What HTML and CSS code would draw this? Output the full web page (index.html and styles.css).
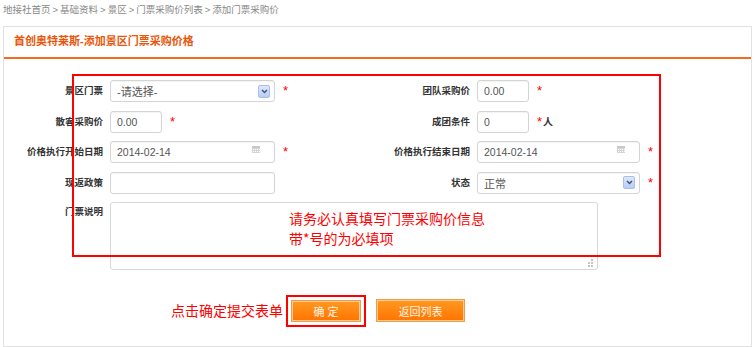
FILE: index.html
```html
<!DOCTYPE html>
<html>
<head>
    <title>添加门票采购价</title>
    <link rel="stylesheet" href="styles.css">
</head>
<body>
    <div class="page">
        <div class="crumbs">
            <a href="#">地接社首页</a><span class="sep">&gt;</span><a href="#">基础资料</a><span class="sep">&gt;</span><a href="#">景区</a><span class="sep">&gt;</span><a href="#">门票采购价列表</a><span class="sep">&gt;</span><span>添加门票采购价</span>
        </div>

        <div class="panel">
            <div class="panel-head">首创奥特莱斯-添加景区门票采购价格</div>

            <div class="panel-body">
                <form class="form-grid">
                    <label class="lbl">景区门票</label>
                    <div class="field">
                        <div class="select wide">
                            <span>-请选择-</span>
                            <span class="drop">
                                <svg width="7" height="5" viewBox="0 0 7 5"><path d="M1 1 L3.5 3.5 L6 1" fill="none" stroke="#3e5580" stroke-width="1.5"/></svg>
                            </span>
                        </div>
                        <span class="req">*</span>
                    </div>
                    <label class="lbl">团队采购价</label>
                    <div class="field">
                        <input type="text" class="input short" value="0.00" />
                        <span class="req">*</span>
                    </div>

                    <label class="lbl">散客采购价</label>
                    <div class="field">
                        <input type="text" class="input short" value="0.00" />
                        <span class="req">*</span>
                    </div>
                    <label class="lbl">成团条件</label>
                    <div class="field">
                        <input type="text" class="input short" value="0" />
                        <span class="req">*</span><span class="unit">人</span>
                    </div>

                    <label class="lbl">价格执行开始日期</label>
                    <div class="field">
                        <div class="date wide">
                            <span>2014-02-14</span>
                            <svg class="cal" width="8" height="7" viewBox="0 0 8 7"><rect x="0" y="0" width="8" height="2" fill="#c8c8c8"/><path d="M0 2.5H8M0 4.5H8M0 6.5H8M0.5 2V7M2.5 2V7M4.5 2V7M6.5 2V7" stroke="#d4d4d4" stroke-width="1"/></svg>
                        </div>
                        <span class="req">*</span>
                    </div>
                    <label class="lbl">价格执行结束日期</label>
                    <div class="field">
                        <div class="date wider">
                            <span>2014-02-14</span>
                            <svg class="cal" width="8" height="7" viewBox="0 0 8 7"><rect x="0" y="0" width="8" height="2" fill="#c8c8c8"/><path d="M0 2.5H8M0 4.5H8M0 6.5H8M0.5 2V7M2.5 2V7M4.5 2V7M6.5 2V7" stroke="#d4d4d4" stroke-width="1"/></svg>
                        </div>
                        <span class="req">*</span>
                    </div>

                    <label class="lbl">现返政策</label>
                    <div class="field">
                        <input type="text" class="input wide" value="" />
                    </div>
                    <label class="lbl">状态</label>
                    <div class="field">
                        <div class="select wider">
                            <span>正常</span>
                            <span class="drop">
                                <svg width="7" height="5" viewBox="0 0 7 5"><path d="M1 1 L3.5 3.5 L6 1" fill="none" stroke="#3e5580" stroke-width="1.5"/></svg>
                            </span>
                        </div>
                        <span class="req">*</span>
                    </div>

                    <label class="lbl lbl-top">门票说明</label>
                    <div class="field field-span">
                        <div class="textarea">
                            <svg class="grip" width="8" height="8" viewBox="0 0 8 8"><g fill="#c4c4c4"><rect x="5" y="0" width="2" height="2"/><rect x="2" y="3" width="2" height="2"/><rect x="5" y="3" width="2" height="2"/><rect x="2" y="6" width="2" height="2"/><rect x="5" y="6" width="2" height="2"/></g></svg>
                        </div>
                    </div>
                </form>

                <div class="btn-row">
                    <div class="btn-wrap">
                        <span class="btn-note">点击确定提交表单</span>
                        <button type="button" class="btn btn-ok">确 定</button>
                    </div>
                    <button type="button" class="btn btn-back">返回列表</button>
                </div>

                <!-- annotation over the form -->
                <div class="mark-box"></div>
                <div class="mark-text">请务必认真填写门票采购价信息<br>带*号的为必填项</div>
            </div>
        </div>
    </div>
</body>
</html>
```

FILE: styles.css
```css
* {
    margin: 0;
    padding: 0;
    box-sizing: border-box;
    font-family: "Liberation Sans", "Noto Sans CJK SC", sans-serif;
}

body {
    background: #fff;
    color: #333;
}

.page {
    padding: 0 3px;
}

.crumbs {
    height: 26px;
    line-height: 20px;
    font-size: 9.5px;
    color: #888;
}

.crumbs a,
.crumbs span {
    color: #888;
    text-decoration: none;
}

.crumbs .sep {
    margin: 0 2px;
}

.panel {
    border: 1px solid #e2e2e2;
    min-height: 321px;
}

.panel-head {
    height: 32px;
    line-height: 29px;
    padding-left: 10px;
    font-size: 11px;
    font-weight: bold;
    color: #e8560a;
    border-bottom: 2px solid #f36c1c;
}

.panel-body {
    position: relative;
    padding-top: 21px;
}

.form-grid {
    display: grid;
    grid-template-columns: 106px 264px 103px 1fr;
    grid-template-rows: repeat(4, 22px) 68px;
    row-gap: 8.5px;
}

.lbl {
    text-align: right;
    padding-right: 7px;
    font-size: 9.5px;
    font-weight: bold;
    color: #333;
    line-height: 22px;
}

.lbl-top {
    line-height: 20px;
}

.field {
    display: flex;
    align-items: center;
}

.field-span {
    grid-column: 2 / 5;
    align-items: flex-start;
}

.input,
.select,
.date {
    height: 22px;
    border: 1px solid #d4d4d4;
    border-radius: 3px;
    font-size: 10.5px;
    color: #555;
    padding: 0 6px;
    background: #fff;
    box-shadow: inset 0 1px 1px rgba(0, 0, 0, 0.05);
}

.input {
    outline: none;
}

.select,
.date {
    display: flex;
    align-items: center;
    justify-content: space-between;
}

.select {
    padding-right: 4px;
    font-size: 11px;
}

.short {
    width: 52px;
}

.wide {
    width: 165px;
}

.wider {
    width: 163px;
}

.drop {
    width: 12px;
    height: 13px;
    border: 1px solid #a9bfe6;
    border-radius: 2px;
    background: linear-gradient(#dce7fb, #b9cdf3);
    display: flex;
    align-items: center;
    justify-content: center;
}

.cal {
    margin-right: 8px;
    margin-top: -5px;
}

.req {
    color: #f00;
    font-size: 13px;
    margin-left: 8px;
    line-height: 22px;
}

.unit {
    font-size: 10px;
    font-weight: bold;
    color: #333;
    margin-left: 1px;
}

.textarea {
    position: relative;
    width: 488px;
    height: 68px;
    border: 1px solid #d8d8d8;
    border-radius: 3px;
}

.grip {
    position: absolute;
    right: 3px;
    bottom: 2px;
}

.btn-row {
    display: flex;
    justify-content: center;
    align-items: flex-start;
    gap: 15px;
    margin-top: 29px;
    padding-left: 1px;
}

.btn-wrap {
    position: relative;
}

.btn-note {
    position: absolute;
    right: calc(100% + 8px);
    top: 1px;
    white-space: nowrap;
    font-size: 14px;
    color: #f00;
    font-family: "Noto Sans CJK SC", sans-serif;
    line-height: 20px;
}

.btn {
    height: 22px;
    font-size: 11px;
    color: #fff4e6;
    border: 1px solid #f29a4c;
    box-shadow: inset 0 0 0 1px #ffc990;
    background: linear-gradient(#ff9a22, #ff7400);
    cursor: pointer;
}

.btn-ok {
    width: 70px;
    margin-top: 1px;
    outline: 2px solid #f00;
    outline-offset: 3px;
}

.btn-back {
    width: 89px;
    height: 23px;
}

.mark-box {
    position: absolute;
    left: 68px;
    top: 15px;
    width: 589px;
    height: 183px;
    border: 2px solid #f00;
    pointer-events: none;
}

.mark-text {
    position: absolute;
    left: 285px;
    top: 149px;
    font-size: 14px;
    line-height: 20px;
    color: #f00;
    font-family: "Noto Sans CJK SC", sans-serif;
}
```
